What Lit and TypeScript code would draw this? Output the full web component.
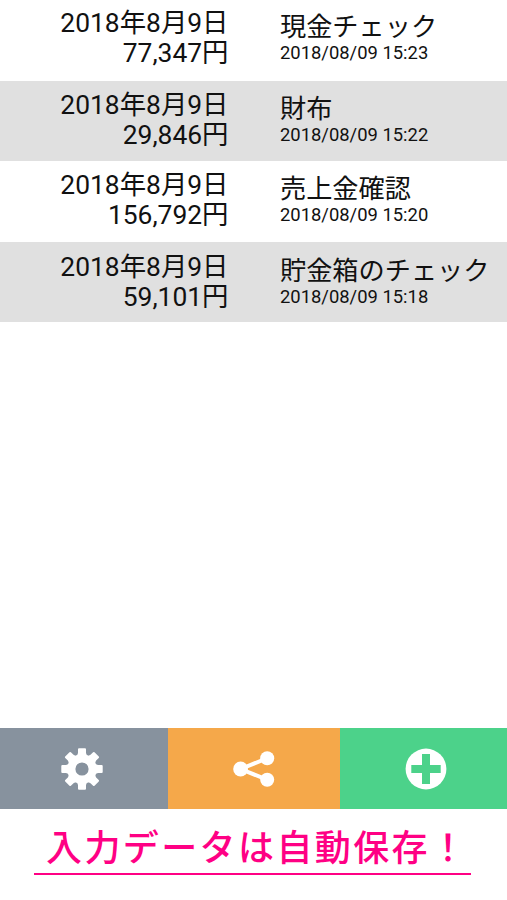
import { LitElement, html, css, svg } from "lit";
import { customElement } from "lit/decorators.js";

interface Entry { date: string; amount: string; title: string; stamp: string; }

const entries: Entry[] = [
  { date: "2018年8月9日", amount: "77,347円", title: "現金チェック", stamp: "2018/08/09 15:23" },
  { date: "2018年8月9日", amount: "29,846円", title: "財布", stamp: "2018/08/09 15:22" },
  { date: "2018年8月9日", amount: "156,792円", title: "売上金確認", stamp: "2018/08/09 15:20" },
  { date: "2018年8月9日", amount: "59,101円", title: "貯金箱のチェック", stamp: "2018/08/09 15:18" },
];

const teeth = [0, 45, 90, 135, 180, 225, 270, 315];

@customElement("app-root")
export class AppRoot extends LitElement {
  static styles = css`
    :host {
      display: flex;
      flex-direction: column;
      height: 900px;
      overflow: hidden;
      background: #fff;
      color: #111;
      font-family: Roboto, "Noto Sans CJK JP", sans-serif;
    }
    .list { flex: 1; }
    .row {
      display: grid;
      grid-template-columns: 228.5px 1fr;
      column-gap: 51.5px;
      height: 81px;
      box-sizing: border-box;
      white-space: nowrap;
    }
    .row:nth-child(even) { background: #e0e0e0; height: 80px; padding-top: 1px; }
    .row:nth-child(3) { padding-top: 1px; }
    .row:nth-child(4) { padding-top: 2px; }
    .left { text-align: right; font-size: 26.4px; line-height: 30px; padding-top: 8px; }
    .title { font-size: 26.2px; line-height: 30px; padding-top: 12px; }
    .stamp { font-size: 18.4px; line-height: 22px; }
    .bar { display: grid; grid-template-columns: 168px 172px 1fr; height: 81px; }
    .cell { display: flex; align-items: center; justify-content: center; }
    .gear { background: #87929e; padding-right: 4px; }
    .share { background: #f5a84a; }
    .add { background: #4cd28a; padding-left: 5px; }
    .foot { height: 91px; padding: 0 36.5px 0 34px; box-sizing: border-box; }
    .caption {
      height: 66px;
      box-sizing: border-box;
      border-bottom: 2px solid #ff0084;
      color: #ff0084;
      font-size: 36px;
      letter-spacing: 2.4px;
      line-height: 80px;
      font-weight: 500;
      padding-left: 12px;
      white-space: nowrap;
    }
  `;

  render() {
    return html`
      <div class="list">
        ${entries.map((e) => html`
          <div class="row">
            <div class="left"><div>${e.date}</div><div>${e.amount}</div></div>
            <div><div class="title">${e.title}</div><div class="stamp">${e.stamp}</div></div>
          </div>`)}
      </div>
      <div class="bar">
        <div class="cell gear">
          <svg width="42" height="42" viewBox="-21 -21 42 42" fill="#fff">
            ${teeth.map((a) => svg`<path d="M-5.5 -12L-4 -16V-19.7Q-4 -20.7 -3 -20.7H3Q4 -20.7 4 -19.7V-16L5.5 -12Z" transform="rotate(${a})" />`)}
            <circle r="10.7" fill="none" stroke="#fff" stroke-width="8.2" />
          </svg>
        </div>
        <div class="cell share">
          <svg width="42" height="38" viewBox="0 0 42 38" fill="#fff">
            <path d="M34 8.3L7.6 19L34 29.7" fill="none" stroke="#fff" stroke-width="4" />
            <circle cx="7.6" cy="19" r="7.4" /><circle cx="34.2" cy="8.3" r="7" /><circle cx="34.2" cy="29.7" r="7" />
          </svg>
        </div>
        <div class="cell add">
          <svg width="42" height="42" viewBox="-21 -21 42 42">
            <circle r="20.4" fill="#fff" />
            <path d="M-14.7 0H14.7M0 -15V15" stroke="#4cd28a" stroke-width="8" />
          </svg>
        </div>
      </div>
      <div class="foot"><div class="caption">入力データは自動保存！</div></div>
    `;
  }
}
